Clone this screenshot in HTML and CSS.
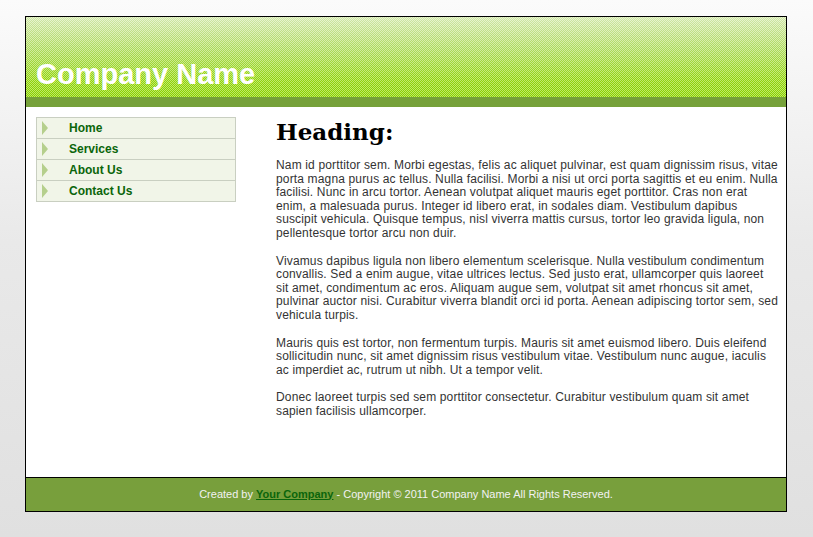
FILE: index.html
```html
<!DOCTYPE html>
<html>
<head>
<meta charset="utf-8">
<link rel="stylesheet" href="styles.css">
</head>
<body>
<div class="wrap">
  <div class="header">
    <div class="logo">Company Name</div>
  </div>
  <div class="band"></div>
  <div class="main">
    <div class="sidebar">
      <ul class="nav">
        <li><a href="#">Home</a></li>
        <li><a href="#">Services</a></li>
        <li><a href="#">About Us</a></li>
        <li><a href="#">Contact Us</a></li>
      </ul>
    </div>
    <div class="content">
      <h1>Heading:</h1>
      <p>Nam id porttitor sem. Morbi egestas, felis ac aliquet pulvinar, est quam dignissim risus, vitae porta magna purus ac tellus. Nulla facilisi. Morbi a nisi ut orci porta sagittis et eu enim. Nulla facilisi. Nunc in arcu tortor. Aenean volutpat aliquet mauris eget porttitor. Cras non erat enim, a malesuada purus. Integer id libero erat, in sodales diam. Vestibulum dapibus suscipit vehicula. Quisque tempus, nisl viverra mattis cursus, tortor leo gravida ligula, non pellentesque tortor arcu non duir.</p>
      <p>Vivamus dapibus ligula non libero elementum scelerisque. Nulla vestibulum condimentum convallis. Sed a enim augue, vitae ultrices lectus. Sed justo erat, ullamcorper quis laoreet sit amet, condimentum ac eros. Aliquam augue sem, volutpat sit amet rhoncus sit amet, pulvinar auctor nisi. Curabitur viverra blandit orci id porta. Aenean adipiscing tortor sem, sed vehicula turpis.</p>
      <p>Mauris quis est tortor, non fermentum turpis. Mauris sit amet euismod libero. Duis eleifend sollicitudin nunc, sit amet dignissim risus vestibulum vitae. Vestibulum nunc augue, iaculis ac imperdiet ac, rutrum ut nibh. Ut a tempor velit.</p>
      <p>Donec laoreet turpis sed sem porttitor consectetur. Curabitur vestibulum quam sit amet sapien facilisis ullamcorper.</p>
    </div>
  </div>
  <div class="footer">Created by <a href="#">Your Company</a> - Copyright &copy; 2011 Company Name All Rights Reserved.</div>
</div>
</body>
</html>
```
FILE: styles.css
```css
html, body {
  margin: 0;
  padding: 0;
}
body {
  min-height: 537px;
  background: linear-gradient(#fbfbfb 0%, #e9e9e9 45%, #e0e0e0 100%);
  font-family: "Liberation Sans", Arial, sans-serif;
  font-size: 12px;
  color: #333;
}
.wrap {
  width: 760px;
  margin: 16px 0 0 25px;
  border: 1px solid #000;
  background: #fff;
  display: flex;
  flex-direction: column;
}
.header {
  height: 80px;
  background:
    repeating-conic-gradient(rgba(255,255,255,0.4) 0 25%, rgba(0,60,0,0.06) 0 50%) 0 0 / 2px 2px,
    linear-gradient(#dcf0b4 0%, #b6e262 40%, #98dc0c 80%, #92da00 100%);
  display: flex;
  align-items: flex-end;
}
.logo {
  font-family: "Liberation Sans", Arial, sans-serif;
  font-weight: bold;
  font-size: 29px;
  color: #fff;
  padding: 0 0 6px 10px;
}
.band {
  height: 10px;
  background: #76a13a;
}
.main {
  display: flex;
  gap: 40px;
  padding: 10px 8px 44px 10px;
}
.sidebar {
  width: 200px;
  flex: none;
}
.nav {
  list-style: none;
  margin: 0;
  padding: 0;
  border: 1px solid #c9cfc1;
}
.nav li {
  height: 20px;
  background: #f1f5e8;
  border-top: 1px solid #c9cfc1;
  position: relative;
}
.nav li:first-child {
  border-top: 0;
}
.nav li::before {
  content: "";
  position: absolute;
  left: 5px;
  top: 3px;
  border-left: 6px solid #b5cf8c;
  border-top: 7px solid transparent;
  border-bottom: 7px solid transparent;
}
.nav a {
  display: block;
  padding-left: 32px;
  line-height: 20px;
  font-weight: bold;
  font-size: 12px;
  color: #0b650b;
  text-decoration: none;
}
.content {
  flex: 1;
}
.content h1 {
  font-family: "DejaVu Serif", Georgia, serif;
  font-size: 23px;
  font-weight: bold;
  color: #000;
  margin: 0 0 12px;
  line-height: 30px;
}
.content p {
  margin: 0 0 14px;
  line-height: 13.6px;
  letter-spacing: 0.15px;
}
.footer {
  background: #789f3c;
  border-top: 1px solid #000;
  height: 33px;
  line-height: 33px;
  text-align: center;
  font-size: 11px;
  color: #f2f2f2;
}
.footer a {
  color: #0b650b;
  font-weight: bold;
}
```
